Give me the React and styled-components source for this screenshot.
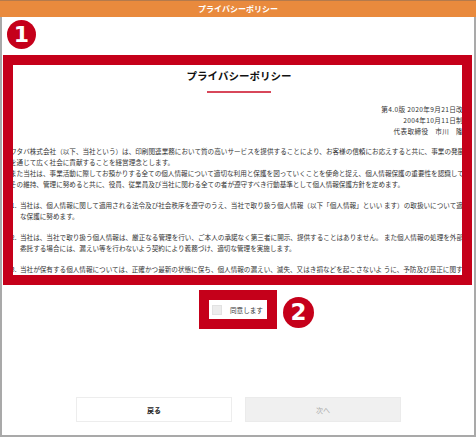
import React from "react";
import styled, { createGlobalStyle } from "styled-components";

const RED = "#c5001a";
const JP = `"Noto Sans CJK JP", "Noto Sans", sans-serif`;

const GlobalStyle = createGlobalStyle`
  html, body { margin: 0; padding: 0; background: #fff; }
  body { font-family: ${JP}; }
`;

const intro = [
  "ワタバ株式会社（以下、当社という）は、印刷関連業務において質の高いサービスを提供することにより、お客様の信頼にお応えすると共に、事業の発展を通じて広く社会に貢献することを経営理念とします。",
  "また当社は、事業活動に際してお預かりする全ての個人情報について適切な利用と保護を図っていくことを使命と捉え、個人情報保護の重要性を認識してその維持、管理に努めると共に、役員、従業員及び当社に関わる全ての者が遵守すべき行動基準として個人情報保護方針を定めます。",
];

const items = [
  "当社は、個人情報に関して適用される法令及び社会秩序を遵守のうえ、当社で取り扱う個人情報（以下「個人情報」といい ます）の取扱いについて適切な保護に努めます。",
  "当社は、当社で取り扱う個人情報は、厳正なる管理を行い、ご本人の承諾なく第三者に開示、提供することはありません。 また個人情報の処理を外部へ委託する場合には、漏えい等を行わないよう契約により義務づけ、適切な管理を実施します。",
  "当社が保有する個人情報については、正確かつ最新の状態に保ち、個人情報の漏えい、滅失、又はき損などを起こさないよ うに、予防及び是正に関する措置を講じます。",
];

const App = () => {
  return (
    <>
      <GlobalStyle />
      <Window>
        <TitleBar>プライバシーポリシー</TitleBar>
        <Body>
          <Marker>1</Marker>
          <Frame>
            <Doc>
              <DocTitle>プライバシーポリシー</DocTitle>
              <Rule />
              <Meta>
                <div>第4.0版 2020年9月21日改定</div>
                <div>2004年10月11日制定</div>
                <div>代表取締役　市川　隆史</div>
              </Meta>
              <Para>
                {intro.map((line, i) => (
                  <div key={i}>{line}</div>
                ))}
              </Para>
              {items.map((text, i) => (
                <Item key={i}>
                  <Num>{i + 1}.</Num>
                  <span>{text}</span>
                </Item>
              ))}
            </Doc>
          </Frame>

          <AgreeRow>
            <AgreeBox>
              <Check />
              <AgreeText>同意します</AgreeText>
              <SideMarker>2</SideMarker>
            </AgreeBox>
          </AgreeRow>

          <Buttons>
            <Button>戻る</Button>
            <Button disabled>次へ</Button>
          </Buttons>
        </Body>
      </Window>
    </>
  );
};

//---------------------------------- STYLES ----------------------------------

const Window = styled.div`
  width: 476px;
  height: 437px;
  display: flex;
  flex-direction: column;
  box-sizing: border-box;
  overflow: hidden;
`;

const TitleBar = styled.div`
  height: 17px;
  flex-shrink: 0;
  background: #e98a3d;
  border-top: 1px solid #b47a4c;
  box-sizing: border-box;
  color: #fff;
  font-size: 8px;
  font-weight: 700;
  line-height: 15px;
  text-align: center;
`;

const Body = styled.div`
  flex: 1;
  display: flex;
  flex-direction: column;
  border: 2px solid #a9a9a9;
  border-top: none;
  padding: 3px 0 13px;
`;

const Marker = styled.div`
  width: 29px;
  height: 29px;
  margin-left: 5px;
  border-radius: 50%;
  background: ${RED};
  color: #fff;
  font-family: "DejaVu Sans", sans-serif;
  font-weight: 700;
  font-size: 22px;
  line-height: 29px;
  text-align: center;
`;

const Frame = styled.div`
  margin: 6px 2px 0 1px;
  height: 230px;
  box-sizing: border-box;
  border: 10px solid ${RED};
  overflow: hidden;
  background: #fff;
`;

const Doc = styled.div`
  width: 462px;
  margin-left: -5px;
  color: #333;
  font-size: 6.6px;
  line-height: 11px;
`;

const DocTitle = styled.div`
  margin-top: 4px;
  font-size: 10.5px;
  line-height: 14px;
  font-weight: 700;
  color: #111;
  text-align: center;
`;

const Rule = styled.div`
  width: 64px;
  height: 2px;
  margin: 8px auto 0;
  background: #d8475a;
`;

const Meta = styled.div`
  margin-top: 11px;
  text-align: right;
  letter-spacing: 0.35px;
`;

const Para = styled.div`
  margin-top: 9px;
  padding-left: 2px;
`;

const Item = styled.div`
  display: flex;
  margin-top: 10px;
`;

const Num = styled.span`
  width: 12px;
  flex-shrink: 0;
  padding-left: 3px;
  box-sizing: border-box;
`;

const AgreeRow = styled.div`
  display: flex;
  justify-content: center;
  margin-top: 5px;
`;

const AgreeBox = styled.div`
  position: relative;
  width: 78px;
  height: 39px;
  box-sizing: border-box;
  border: 10px solid ${RED};
  display: flex;
  align-items: center;
  padding-left: 3px;
  gap: 8px;
  background: #fff;
`;

const Check = styled.div`
  width: 10px;
  height: 10px;
  background: #ececec;
  border: 1px solid #e2e2e2;
  box-sizing: border-box;
`;

const AgreeText = styled.span`
  font-size: 6.6px;
  color: #333;
  white-space: nowrap;
`;

const SideMarker = styled(Marker)`
  position: absolute;
  left: 74px;
  top: -3px;
  margin: 0;
  width: 31px;
  height: 31px;
  line-height: 31px;
  font-size: 23px;
`;

const Buttons = styled.div`
  margin-top: auto;
  display: flex;
  justify-content: center;
  gap: 13px;
  padding-left: 1px;
`;

const Button = styled.button`
  width: 156px;
  height: 25px;
  box-sizing: border-box;
  font-family: ${JP};
  font-size: 7px;
  font-weight: ${(p) => (p.disabled ? 400 : 700)};
  color: ${(p) => (p.disabled ? "#a8a8a8" : "#222")};
  background: ${(p) => (p.disabled ? "#f0f0f0" : "#fff")};
  border: 1px solid ${(p) => (p.disabled ? "#ebebeb" : "#ededed")};
  padding: 0;
`;

export default App;
